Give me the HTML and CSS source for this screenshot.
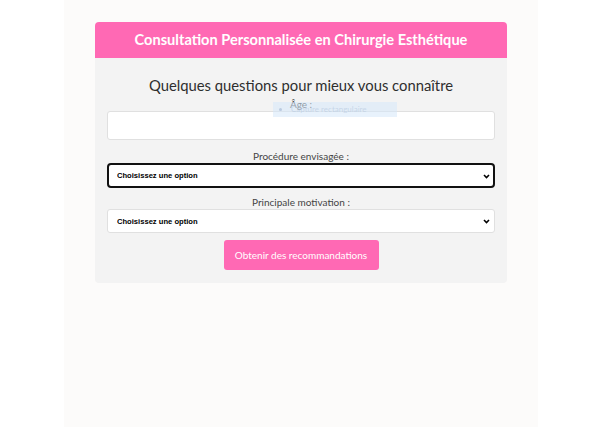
FILE: index.html
```html
<!DOCTYPE html>
<html lang="fr">

<head>
    <meta charset="UTF-8">
    <meta name="viewport" content="width=device-width, initial-scale=1.0">
    <title>Consultation Personnalisée</title>
    <link rel="stylesheet" href="styles.css">
</head>

<body>
    <div class="page">
        <div class="card">
            <div class="header">Consultation Personnalisée en Chirurgie Esthétique</div>
            <form class="panel">
                <h2>Quelques questions pour mieux vous connaître</h2>

                <div class="field first">
                    <label for="age">Âge :</label>
                    <input type="number" id="age" class="control">
                    <div class="capture"><span class="dot"></span>Capture rectangulaire</div>
                </div>

                <div class="field">
                    <label for="procedure">Procédure envisagée :</label>
                    <div class="select-wrap">
                        <select id="procedure" class="control select focused">
                            <option>Choisissez une option</option>
                        </select>
                        <svg class="chevron" width="7" height="5" viewBox="0 0 7 5"><path d="M1 1l2.5 2.5L6 1" fill="none" stroke="#000" stroke-width="1.6"/></svg>
                    </div>
                </div>

                <div class="field">
                    <label for="motivation">Principale motivation :</label>
                    <div class="select-wrap">
                        <select id="motivation" class="control select">
                            <option>Choisissez une option</option>
                        </select>
                        <svg class="chevron" width="7" height="5" viewBox="0 0 7 5"><path d="M1 1l2.5 2.5L6 1" fill="none" stroke="#000" stroke-width="1.6"/></svg>
                    </div>
                </div>

                <button type="button" class="button">Obtenir des recommandations</button>
            </form>
        </div>
    </div>
</body>

</html>
```

FILE: styles.css
```css
body {
    margin: 0;
    background: #ffffff;
    font-family: Lato, "Noto Sans", sans-serif;
    color: #333333;
}

.page {
    margin-left: 64px;
    width: 474px;
    min-height: 427px;
    background: #fcfbfa;
    padding: 22px 31px 0;
    box-sizing: border-box;
}

.header {
    background: #ff69b4;
    color: #ffffff;
    border-radius: 4px 4px 0 0;
    height: 36px;
    line-height: 36px;
    text-align: center;
    font-size: 14.6px;
    font-weight: bold;
}

.panel {
    background: #f3f3f3;
    border-radius: 0 0 4px 4px;
    padding: 16px 12px 13px;
    display: flex;
    flex-direction: column;
    align-items: center;
}

.panel h2 {
    margin: 0;
    font-size: 14.8px;
    font-weight: normal;
    line-height: 23px;
    color: #2e2e2e;
}

.field {
    position: relative;
    width: 100%;
    display: flex;
    flex-direction: column;
    align-items: center;
    margin-bottom: 7px;
}

.field.first {
    margin-bottom: 9px;
}

.field label {
    font-size: 10px;
    line-height: 14px;
    color: #444444;
}

.control {
    width: 100%;
    box-sizing: border-box;
    background: #ffffff;
    border: 1px solid #e0e0e0;
    border-radius: 3px;
    height: 29px;
    margin: 0;
}

.select-wrap {
    position: relative;
    width: 100%;
}

.select {
    display: block;
    height: 25px;
    padding: 0 4px 0 9px;
    appearance: none;
    font-family: "Liberation Sans", Arial, sans-serif;
    font-size: 7.6px;
    font-weight: bold;
    color: #000000;
}

#motivation {
    height: 24px;
}

.focused {
    border: 2px solid #111111;
    border-radius: 4px;
    padding-left: 8px;
}

.chevron {
    position: absolute;
    right: 5px;
    top: 50%;
    margin-top: -2px;
}

.capture {
    position: absolute;
    left: 166px;
    top: 5px;
    width: 124px;
    height: 15px;
    background: rgba(214, 232, 250, 0.55);
    color: rgba(170, 190, 215, 0.5);
    font-size: 8px;
    line-height: 15px;
    padding-left: 18px;
    box-sizing: border-box;
}

.capture .dot {
    position: absolute;
    left: 6px;
    top: 6px;
    width: 3px;
    height: 3px;
    border-radius: 50%;
    background: rgba(160, 180, 210, 0.6);
}

.button {
    width: 155px;
    height: 30px;
    padding: 0;
    border: none;
    border-radius: 3px;
    background: #ff69b4;
    color: #ffffff;
    font-family: Lato, "Noto Sans", sans-serif;
    font-size: 10px;
    cursor: pointer;
}
```
